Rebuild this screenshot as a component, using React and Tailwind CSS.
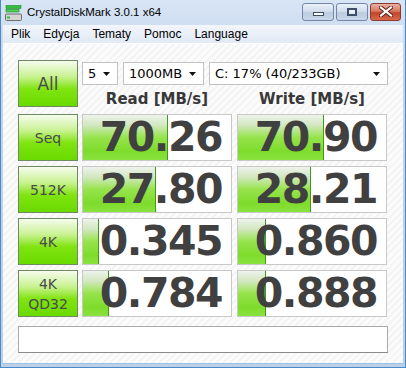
import React from 'react';

const rows = [
  { label: ['Seq'], read: '70.26', readBar: 85, write: '70.90', writeBar: 86 },
  { label: ['512K'], read: '27.80', readBar: 73, write: '28.21', writeBar: 73 },
  { label: ['4K'], read: '0.345', readBar: 16, write: '0.860', writeBar: 28 },
  { label: ['4K', 'QD32'], read: '0.784', readBar: 26, write: '0.888', writeBar: 28 },
];

const Arrow = () => (
  <svg width="8" height="4" viewBox="0 0 8 4" className="shrink-0">
    <path d="M0 0h7L3.5 4z" fill="#111" />
  </svg>
);

const Select = ({ text, className }) => (
  <div className={`h-[23px] bg-white border border-[#c2c2c2] flex items-center justify-between pl-[5px] pr-[6px] text-[13px] text-black ${className}`}>
    <span>{text}</span>
    <Arrow />
  </div>
);

const LabelButton = ({ lines, big }) => (
  <div className="w-[60px] h-[47px] shrink-0 border border-[#6f8a63] bg-[linear-gradient(to_bottom,#f6fcee_0%,#c8f290_35%,#80e410_62%,#6ada00_100%)] flex flex-col items-center justify-center text-[#4a4a4a] leading-[20px]">
    {lines.map(l => (
      <span key={l} className={big ? 'text-[17px]' : 'text-[14px]'}>{l}</span>
    ))}
  </div>
);

const ValueBox = ({ value, bar }) => (
  <div className="relative w-[150px] h-[47px] shrink-0 bg-white border border-[#c8c8c8]">
    <div
      className="absolute left-0 top-0 bottom-0 border-r border-[#3f9a1c] bg-[linear-gradient(to_bottom,#eef2ec_0%,#d3e8c2_22%,#96e34c_50%,#7edc2c_80%,#8ae23e_100%)]"
      style={{ width: bar }}
    />
    <div className="relative h-full flex items-center justify-end pr-[9px] font-['DejaVu_Sans',sans-serif] font-bold text-[41px] tracking-[-1.5px] text-[#404040] leading-none">
      {value}
    </div>
  </div>
);

const TitleButton = ({ children, red }) => (
  <div className={`h-[18px] rounded-[3px] border flex items-center justify-center ${red ? 'w-[31px] border-[#8b3a2c] bg-[linear-gradient(to_bottom,#e9b2a4_0%,#d9765e_45%,#c4432a_55%,#d86a4c_100%)]' : 'w-[32px] border-[#7187a5] bg-[linear-gradient(to_bottom,#eaf1f9_0%,#d2deed_45%,#bccbe0_55%,#cbd8ea_100%)]'}`}>
      {children}
  </div>
);

export default function App() {
  return (
    <div className="w-[406px] h-[368px] overflow-hidden flex flex-col bg-[linear-gradient(to_bottom,#d8e5f5,#c3d5ed_60px,#bcd0ea)] border-x border-b border-[#4a8acb] font-['DejaVu_Sans',sans-serif]">
      {/* title bar */}
      <div className="h-[25px] shrink-0 flex items-center pl-[4px] pr-[4px]">
        <svg width="17" height="16" viewBox="0 0 17 16" className="mr-[5px]">
          <rect x="1" y="0.5" width="15" height="3" fill="#2fbf3a" stroke="#1d8a28" strokeWidth="0.6" />
          <rect x="1" y="4.5" width="13" height="2.5" fill="#4bd04f" stroke="#1d8a28" strokeWidth="0.6" />
          <rect x="0.5" y="9" width="16" height="6.5" rx="1" fill="#d4d4d4" stroke="#6d6d6d" />
          <rect x="2" y="11.5" width="3" height="2" fill="#39c43c" />
        </svg>
        <span className="text-[11.5px] text-black font-['Liberation_Sans',Arial,sans-serif]">CrystalDiskMark 3.0.1 x64</span>
        <div className="flex-1" />
        <div className="flex gap-[2px] mt-[-2px]">
          <TitleButton>
            <div className="w-[11px] h-[4px] mt-[5px] bg-white border border-[#3d4f68]" />
          </TitleButton>
          <TitleButton>
            <div className="w-[10px] h-[8px] border-[2px] border-[#3d4f68] bg-white/60" />
          </TitleButton>
          <TitleButton red>
            <svg width="14" height="11" viewBox="0 0 14 11">
              <path d="M2 1.5L12 9.5M12 1.5L2 9.5" stroke="#5a1e14" strokeWidth="4" strokeLinecap="square" />
              <path d="M2 1.5L12 9.5M12 1.5L2 9.5" stroke="#fff" strokeWidth="2.2" strokeLinecap="square" />
            </svg>
          </TitleButton>
        </div>
      </div>

      <div className="flex-1 flex flex-col mx-[2px] mb-[3px] border-b border-[#9cc3e6]">
        {/* menu bar */}
        <div className="h-[19px] shrink-0 flex items-center gap-[13px] pl-[8px] bg-[linear-gradient(to_bottom,#f3f6fb,#e0e9f5)] border-b border-white text-[12px] text-black font-['Liberation_Sans',Arial,sans-serif]">
          <span>Plik</span>
          <span>Edycja</span>
          <span>Tematy</span>
          <span>Pomoc</span>
          <span>Language</span>
        </div>

        {/* client */}
        <div className="flex-1 pl-[15px] pt-[16px] bg-[repeating-linear-gradient(135deg,#f4f4f4_0px,#f4f4f4_2px,#fbfbfb_2px,#fbfbfb_5px)]">
          <div className="flex gap-[4px]">
            <LabelButton lines={['All']} big />
            <div className="flex flex-col pt-[2px]">
              <div className="flex gap-[5px]">
                <Select text="5" className="w-[36px]" />
                <Select text="1000MB" className="w-[81px]" />
                <Select text="C: 17% (40/233GB)" className="w-[179px]" />
              </div>
              <div className="flex gap-[5px] mt-[5px] text-[15px] font-bold text-[#383838] leading-[18px]">
                <div className="w-[150px] text-center">Read [MB/s]</div>
                <div className="w-[150px] text-center">Write [MB/s]</div>
              </div>
            </div>
          </div>

          <div className="flex flex-col gap-[5px] mt-[6px]">
            {rows.map(r => (
              <div key={r.read} className="flex">
                <LabelButton lines={r.label} />
                <div className="ml-[4px]">
                  <ValueBox value={r.read} bar={r.readBar} />
                </div>
                <div className="ml-[5px]">
                  <ValueBox value={r.write} bar={r.writeBar} />
                </div>
              </div>
            ))}
          </div>

          <div className="mt-[9px] w-[370px] h-[27px] bg-white border border-[#a9a9a9] border-b-[#8a8a8a]" />
        </div>
      </div>
    </div>
  );
}
